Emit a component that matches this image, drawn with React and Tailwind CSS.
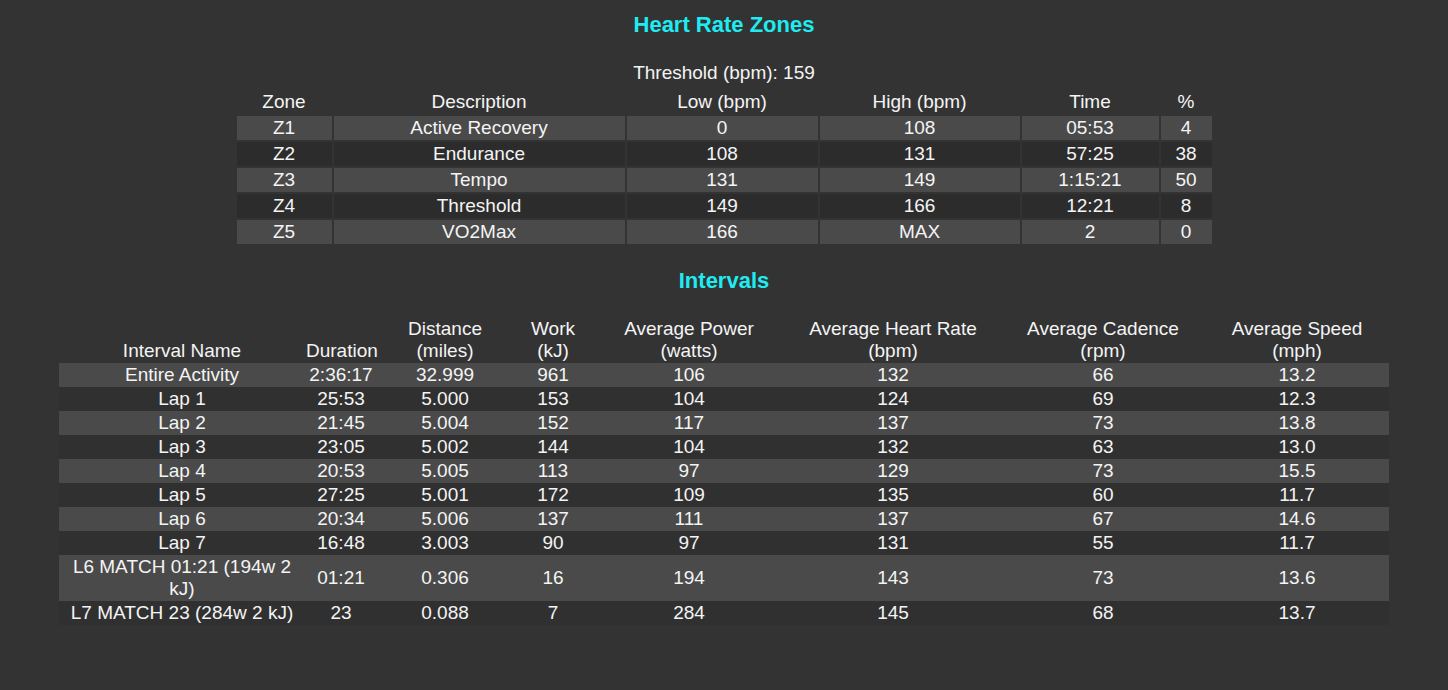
import React from "react";

const zoneCols = [
  { label: "Zone", w: "w-[95px]" },
  { label: "Description", w: "w-[291px]" },
  { label: "Low (bpm)", w: "w-[191px]" },
  { label: "High (bpm)", w: "w-[200px]" },
  { label: "Time", w: "w-[137px]" },
  { label: "%", w: "w-[51px]" },
];

const zones = [
  ["Z1", "Active Recovery", "0", "108", "05:53", "4"],
  ["Z2", "Endurance", "108", "131", "57:25", "38"],
  ["Z3", "Tempo", "131", "149", "1:15:21", "50"],
  ["Z4", "Threshold", "149", "166", "12:21", "8"],
  ["Z5", "VO2Max", "166", "MAX", "2", "0"],
];

const intervalCols = [
  { top: "", bottom: "Interval Name", w: "w-[246px]" },
  { top: "", bottom: "Duration", w: "w-[72px]" },
  { top: "Distance", bottom: "(miles)", w: "w-[136px]" },
  { top: "Work", bottom: "(kJ)", w: "w-[80px]" },
  { top: "Average Power", bottom: "(watts)", w: "w-[192px]" },
  { top: "Average Heart Rate", bottom: "(bpm)", w: "w-[216px]" },
  { top: "Average Cadence", bottom: "(rpm)", w: "w-[204px]" },
  { top: "Average Speed", bottom: "(mph)", w: "w-[184px]" },
];

const intervals = [
  ["Entire Activity", "2:36:17", "32.999", "961", "106", "132", "66", "13.2"],
  ["Lap 1", "25:53", "5.000", "153", "104", "124", "69", "12.3"],
  ["Lap 2", "21:45", "5.004", "152", "117", "137", "73", "13.8"],
  ["Lap 3", "23:05", "5.002", "144", "104", "132", "63", "13.0"],
  ["Lap 4", "20:53", "5.005", "113", "97", "129", "73", "15.5"],
  ["Lap 5", "27:25", "5.001", "172", "109", "135", "60", "11.7"],
  ["Lap 6", "20:34", "5.006", "137", "111", "137", "67", "14.6"],
  ["Lap 7", "16:48", "3.003", "90", "97", "131", "55", "11.7"],
  ["L6 MATCH 01:21 (194w 2 kJ)", "01:21", "0.306", "16", "194", "143", "73", "13.6"],
  ["L7 MATCH 23 (284w 2 kJ)", "23", "0.088", "7", "284", "145", "68", "13.7"],
];

const App = () => {
  return (
    <div className="min-h-screen bg-[#333333] text-[#f4f4f4] font-['Liberation_Sans',Arial,sans-serif] text-[19px] leading-[22px] pt-[12px]">
      <h2 className="text-center text-[22px] leading-[25px] font-bold text-[#1eecf2]">
        Heart Rate Zones
      </h2>
      <div className="text-center mt-[25px]">Threshold (bpm): 159</div>

      <table className="mx-auto mt-[4px] w-[979px] table-fixed border-separate border-spacing-[2px]">
        <thead>
          <tr>
            {zoneCols.map((c) => (
              <th key={c.label} className={`${c.w} p-px h-[24px] font-normal text-center`}>
                {c.label}
              </th>
            ))}
          </tr>
        </thead>
        <tbody>
          {zones.map((row, idx) => (
            <tr key={row[0]}>
              {row.map((cell, i) => (
                <td
                  key={i}
                  className={`p-px h-[24px] text-center ${idx % 2 === 0 ? "bg-[#4a4a4a]" : "bg-[#2c2c2c]"}`}
                >
                  {cell}
                </td>
              ))}
            </tr>
          ))}
        </tbody>
      </table>

      <h2 className="text-center text-[22px] leading-[25px] font-bold text-[#1eecf2] mt-[22px]">
        Intervals
      </h2>

      <table className="mx-auto mt-[24px] w-[1330px] table-fixed border-collapse">
        <thead>
          <tr>
            {intervalCols.map((c) => (
              <th key={c.bottom} className={`${c.w} p-px font-normal text-center align-bottom`}>
                {c.top ? <div>{c.top}</div> : null}
                <div>{c.bottom}</div>
              </th>
            ))}
          </tr>
        </thead>
        <tbody>
          {intervals.map((row, idx) => (
            <tr key={row[0]} className={idx % 2 === 0 ? "bg-[#4a4a4a]" : "bg-[#303030]"}>
              {row.map((cell, i) => (
                <td key={i} className="p-px text-center align-middle">
                  {cell}
                </td>
              ))}
            </tr>
          ))}
        </tbody>
      </table>
    </div>
  );
};

export default App;
